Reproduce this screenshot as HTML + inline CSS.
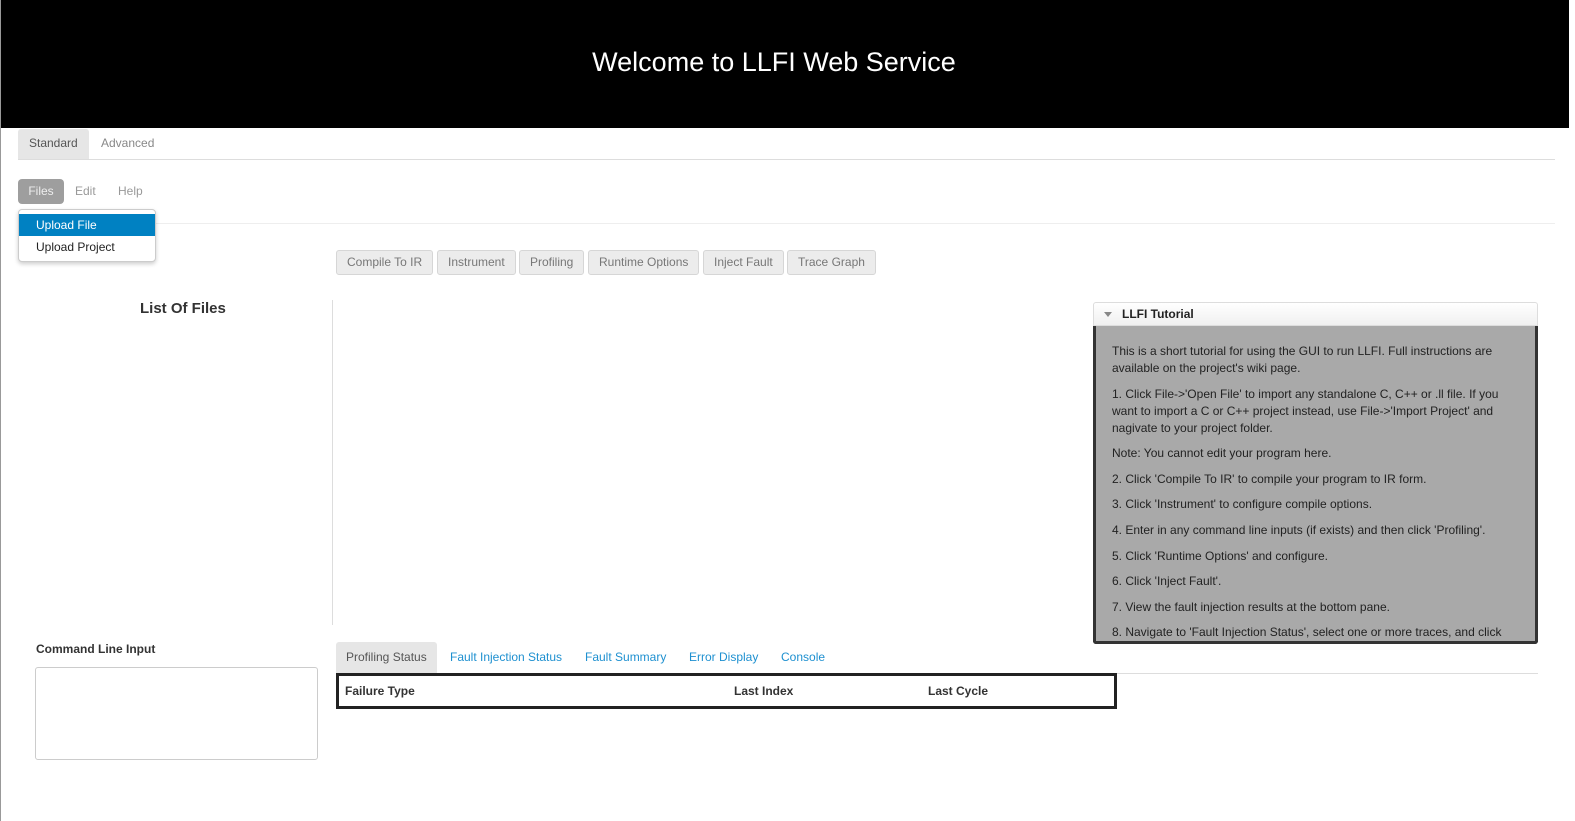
<!DOCTYPE html>
<html><head><meta charset="utf-8"><style>
*{box-sizing:border-box;margin:0;padding:0}
body{width:1575px;height:821px;overflow:hidden;background:#fff;font-family:"Liberation Sans",sans-serif;font-size:12px;color:#333;position:relative;border-left:1px solid #999}
.abs{position:absolute}
#hdr{left:0;top:0;width:1568px;height:128px;background:#000;color:#fff;font-size:27px;text-align:center;line-height:124px;padding-right:22px}
.tab{top:129px;height:30px;line-height:28px;font-size:12px;color:#888;padding:0 11px}
.btn{top:250px;height:25px;line-height:23px;border:1px solid #d6d6d6;border-radius:3px;background:#ececec;color:#777;padding:0 10px;font-size:12px}
.tut p{margin-bottom:8.6px;line-height:17px}
.bt{top:642px;height:31px;line-height:30px;font-size:12px;color:#1e90d0;padding:0 10px}
</style></head><body>
<div id="hdr" class="abs">Welcome to LLFI Web Service</div>
<div class="abs" style="left:17px;top:159px;width:1537px;border-top:1px solid #ddd"></div>
<div class="abs tab" style="left:17px;background:#e6e6e6;color:#555;border-radius:3px 3px 0 0">Standard</div>
<div class="abs tab" style="left:89px">Advanced</div>
<div class="abs" style="left:17px;top:179px;width:46px;height:25px;background:#9e9e9e;border-radius:4px;color:#eee;line-height:24px;text-align:center">Files</div>
<div class="abs" style="left:74px;top:184px;color:#999">Edit</div>
<div class="abs" style="left:117px;top:184px;color:#999">Help</div>
<div class="abs" style="left:17px;top:223px;width:1537px;border-top:1px solid #eee"></div>
<div class="abs" style="left:17px;top:209px;width:138px;height:53px;background:#fff;border:1px solid #ccc;border-radius:4px;box-shadow:0 2px 4px rgba(0,0,0,.2)">
<div style="margin-top:4px;height:22px;background:#0081c2;color:#fff;line-height:22px;padding-left:17px">Upload File</div>
<div style="height:22px;line-height:22px;padding-left:17px;color:#222">Upload Project</div></div>
<div class="abs btn" style="left:335px">Compile To IR</div>
<div class="abs btn" style="left:436px">Instrument</div>
<div class="abs btn" style="left:518px">Profiling</div>
<div class="abs btn" style="left:587px">Runtime Options</div>
<div class="abs btn" style="left:702px">Inject Fault</div>
<div class="abs btn" style="left:786px">Trace Graph</div>
<div class="abs" style="left:139px;top:300px;font-size:15px;font-weight:bold">List Of Files</div>
<div class="abs" style="left:331px;top:300px;height:325px;border-left:1px solid #ddd"></div>
<div class="abs" style="left:1092px;top:302px;width:445px;height:24px;border:1px solid #ddd;border-radius:3px 3px 0 0;background:linear-gradient(#fff,#f0f0f0);font-weight:bold;line-height:22px;padding-left:28px;color:#222">LLFI Tutorial<span style="position:absolute;left:10px;top:9px;border:4px solid transparent;border-top:5px solid #888;border-bottom:0"></span></div>
<div class="abs tut" style="left:1092px;top:326px;width:445px;height:318px;background:#a9a9a9;border:3px solid #333;border-top:0;border-radius:0 0 3px 3px;padding:17px 16px 0 16px;overflow:hidden;color:#222">
<p>This is a short tutorial for using the GUI to run LLFI. Full instructions are available on the project's wiki page.</p>
<p>1. Click File-&gt;'Open File' to import any standalone C, C++ or .ll file. If you want to import a C or C++ project instead, use File-&gt;'Import Project' and nagivate to your project folder.</p>
<p>Note: You cannot edit your program here.</p>
<p>2. Click 'Compile To IR' to compile your program to IR form.</p>
<p>3. Click 'Instrument' to configure compile options.</p>
<p>4. Enter in any command line inputs (if exists) and then click 'Profiling'.</p>
<p>5. Click 'Runtime Options' and configure.</p>
<p>6. Click 'Inject Fault'.</p>
<p>7. View the fault injection results at the bottom pane.</p>
<p>8. Navigate to 'Fault Injection Status', select one or more traces, and click</p>
</div>
<div class="abs" style="left:35px;top:642px;font-weight:bold">Command Line Input</div>
<div class="abs" style="left:34px;top:667px;width:283px;height:93px;border:1px solid #ccc;border-radius:3px"></div>
<div class="abs bt" style="left:335px;background:#e6e6e6;color:#555;border-radius:3px 3px 0 0">Profiling Status</div>
<div class="abs bt" style="left:439px">Fault Injection Status</div>
<div class="abs bt" style="left:574px">Fault Summary</div>
<div class="abs bt" style="left:678px">Error Display</div>
<div class="abs bt" style="left:770px">Console</div>
<div class="abs" style="left:335px;top:673px;width:1202px;border-top:1px solid #ddd"></div>
<div class="abs" style="left:335px;top:673px;width:781px;height:36px;border:3px solid #222;font-weight:bold;line-height:30px">
<span class="abs" style="left:6px">Failure Type</span><span class="abs" style="left:395px">Last Index</span><span class="abs" style="left:589px">Last Cycle</span></div>
</body></html>
